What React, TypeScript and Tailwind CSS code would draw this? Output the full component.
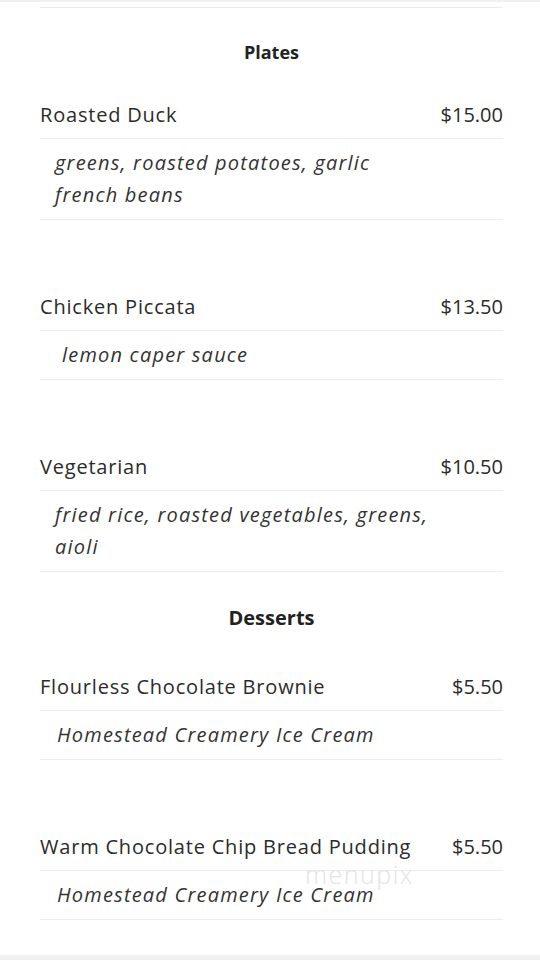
import React from "react";

type Item = { name: string; price: string; desc: string[]; descPad: string; gapAfter: boolean };

const plates: Item[] = [
  { name: "Roasted Duck", price: "$15.00", desc: ["greens, roasted potatoes, garlic", "french beans"], descPad: "pl-[15px]", gapAfter: true },
  { name: "Chicken Piccata", price: "$13.50", desc: ["lemon caper sauce"], descPad: "pl-[22px]", gapAfter: true },
  { name: "Vegetarian", price: "$10.50", desc: ["fried rice, roasted vegetables, greens,", "aioli"], descPad: "pl-[15px]", gapAfter: false },
];

const desserts: Item[] = [
  { name: "Flourless Chocolate Brownie", price: "$5.50", desc: ["Homestead Creamery Ice Cream"], descPad: "pl-[17px]", gapAfter: true },
  { name: "Warm Chocolate Chip Bread Pudding", price: "$5.50", desc: ["Homestead Creamery Ice Cream"], descPad: "pl-[17px]", gapAfter: false },
];

function MenuItem({ item }: { item: Item }) {
  return (
    <div className={item.gapAfter ? "mb-[63px]" : ""}>
      <div className="flex h-[48px] items-center justify-between border-b border-[#ececec] text-[20px] text-[#2b2b2b]">
        <span className="tracking-[0.8px]">{item.name}</span>
        <span>{item.price}</span>
      </div>
      <div className={`border-b border-[#ececec] py-[8px] ${item.descPad} text-[20px] italic leading-[32px] tracking-[1.2px] text-[#333]`}>
        {item.desc.map((d) => (
          <div key={d}>{d}</div>
        ))}
      </div>
    </div>
  );
}

export default function App() {
  return (
    <div
      className="relative h-[960px] w-[540px] overflow-hidden bg-white"
      style={{ fontFamily: '"Open Sans", "Liberation Sans", sans-serif' }}
    >
      <div className="h-[2px] bg-[#f0f0f0]" />
      <div className="ml-[40px] mr-[37px] mt-[5px] border-t border-[#ececec]">
        <div className="pt-[32px] pb-[27px] text-center text-[18px] font-bold leading-[24px] text-[#222]">Plates</div>
        {plates.map((it) => (
          <MenuItem key={it.name} item={it} />
        ))}
        <div className="pt-[34px] pb-[33px] text-center text-[20px] font-bold leading-[24px] text-[#222]">Desserts</div>
        {desserts.map((it) => (
          <MenuItem key={it.name} item={it} />
        ))}
      </div>
      <div className="pointer-events-none absolute left-[305px] top-[861px] text-[25px] font-light leading-[26px] tracking-[1.5px] text-[#e4e4e4]">
        menupix
      </div>
      <div className="absolute bottom-0 left-0 h-[5px] w-full bg-[#f0f0f0]" />
    </div>
  );
}
